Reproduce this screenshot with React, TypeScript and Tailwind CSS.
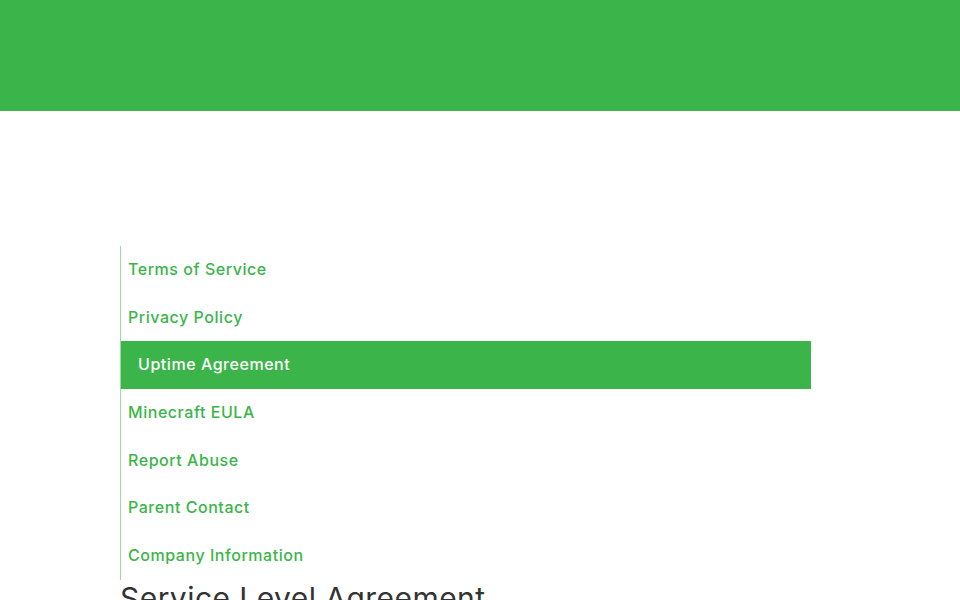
const LINKS = [
  "Terms of Service",
  "Privacy Policy",
  "Uptime Agreement",
  "Minecraft EULA",
  "Report Abuse",
  "Parent Contact",
  "Company Information",
];

const ACTIVE = "Uptime Agreement";

export default function App() {
  return (
    <div className="min-h-[600px] bg-white font-['Inter','Noto_Sans',sans-serif]">
      <header className="h-[111px] bg-[#3bb54a]" />

      <main className="pl-[120px] pr-[149px] pt-[135px]">
        <nav className="flex flex-col border-l border-[#9fd9a8]">
          {LINKS.map((l) => (
            <a
              key={l}
              href="#"
              className={
                l === ACTIVE
                  ? "flex h-[47.7px] items-center bg-[#3bb54a] pb-[2px] pl-[17px] text-[16px] font-medium tracking-[0.034em] text-white"
                  : "flex h-[47.7px] items-center pb-[2px] pl-[7px] text-[16px] font-medium tracking-[0.034em] text-[#3bb54a]"
              }
            >
              {l}
            </a>
          ))}
        </nav>

        <h1 className="mt-[2px] text-[30px] font-normal leading-[1.1] tracking-[0.015em] text-[#333333]">
          Service Level Agreement
        </h1>
      </main>
    </div>
  );
}
